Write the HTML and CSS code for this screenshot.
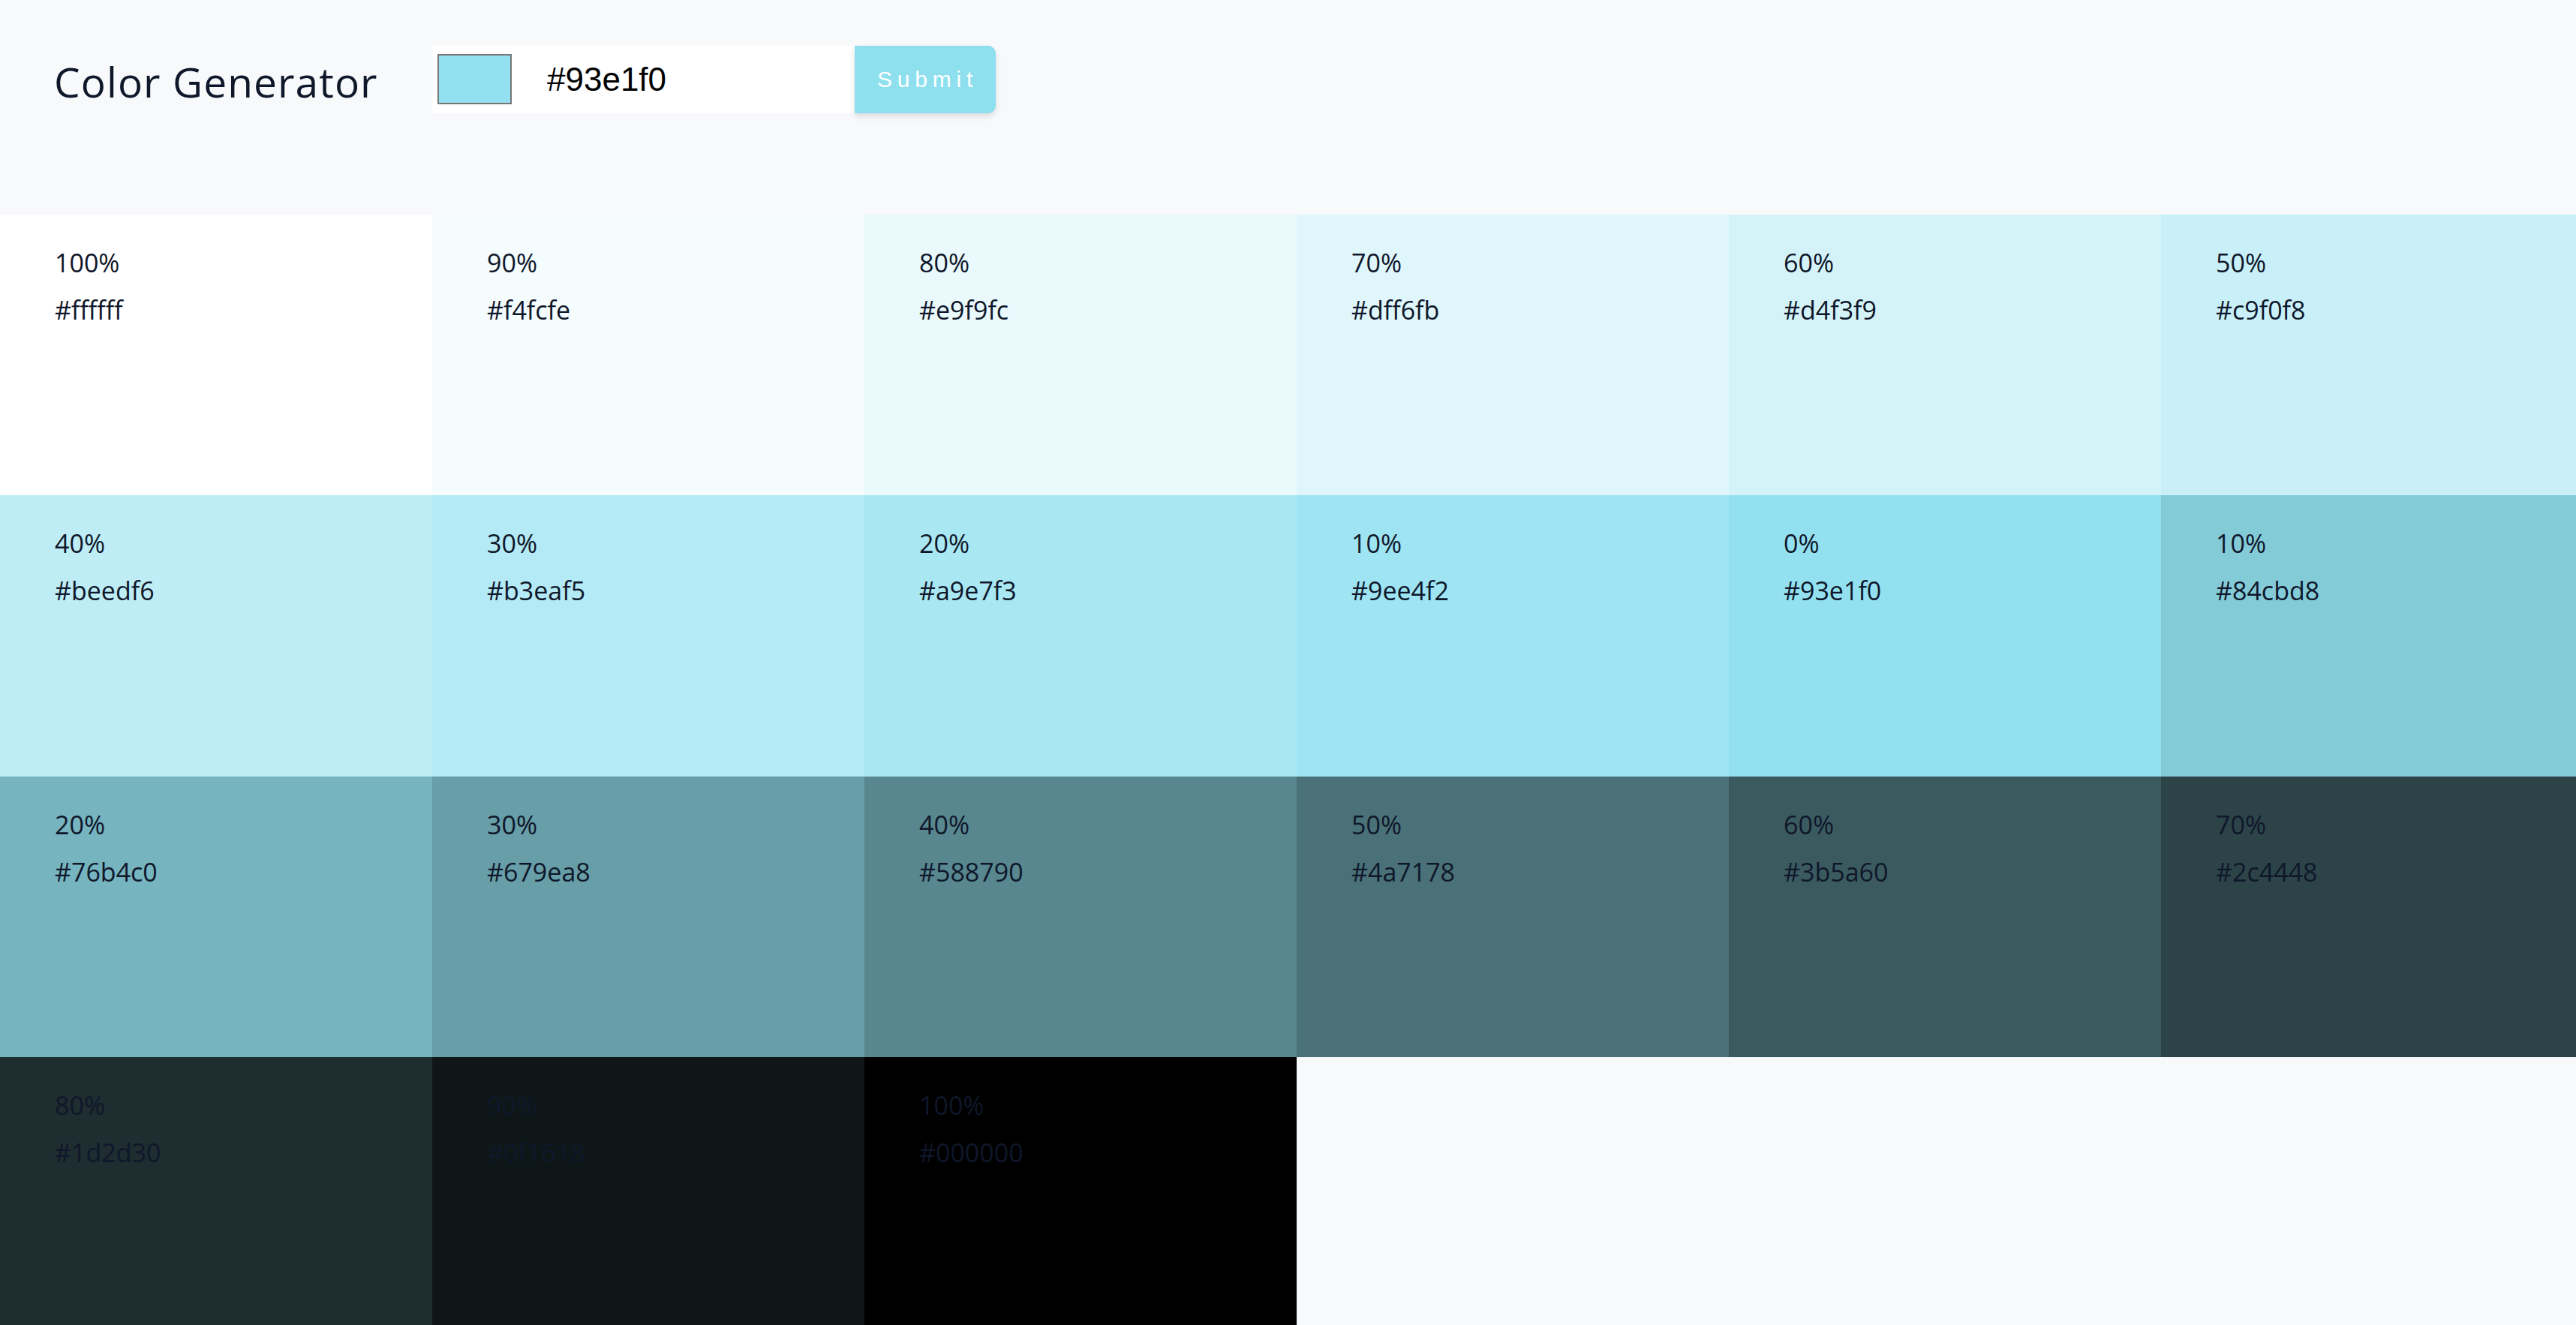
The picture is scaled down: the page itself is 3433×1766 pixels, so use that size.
FILE: index.html
```html
<!DOCTYPE html>
<html lang="en">
<head>
<meta charset="utf-8">
<title>Color Generator</title>
<link rel="stylesheet" href="styles.css">
</head>
<body>
<section class="header">
  <h3 class="title">Color Generator</h3>
  <form class="form">
    <div class="field">
      <span class="swatch"></span>
      <input class="hex-input" type="text" value="#93e1f0">
    </div>
    <button class="btn" type="button">Submit</button>
  </form>
</section>
<section class="colors">
  <article class="tile" style="background:#ffffff"><p class="pct">100%</p><p class="hex">#ffffff</p></article>
  <article class="tile" style="background:#f4fcfe"><p class="pct">90%</p><p class="hex">#f4fcfe</p></article>
  <article class="tile" style="background:#e9f9fc"><p class="pct">80%</p><p class="hex">#e9f9fc</p></article>
  <article class="tile" style="background:#dff6fb"><p class="pct">70%</p><p class="hex">#dff6fb</p></article>
  <article class="tile" style="background:#d4f3f9"><p class="pct">60%</p><p class="hex">#d4f3f9</p></article>
  <article class="tile" style="background:#c9f0f8"><p class="pct">50%</p><p class="hex">#c9f0f8</p></article>
  <article class="tile" style="background:#beedf6"><p class="pct">40%</p><p class="hex">#beedf6</p></article>
  <article class="tile" style="background:#b3eaf5"><p class="pct">30%</p><p class="hex">#b3eaf5</p></article>
  <article class="tile" style="background:#a9e7f3"><p class="pct">20%</p><p class="hex">#a9e7f3</p></article>
  <article class="tile" style="background:#9ee4f2"><p class="pct">10%</p><p class="hex">#9ee4f2</p></article>
  <article class="tile" style="background:#93e1f0"><p class="pct">0%</p><p class="hex">#93e1f0</p></article>
  <article class="tile" style="background:#84cbd8"><p class="pct">10%</p><p class="hex">#84cbd8</p></article>
  <article class="tile" style="background:#76b4c0"><p class="pct">20%</p><p class="hex">#76b4c0</p></article>
  <article class="tile" style="background:#679ea8"><p class="pct">30%</p><p class="hex">#679ea8</p></article>
  <article class="tile" style="background:#588790"><p class="pct">40%</p><p class="hex">#588790</p></article>
  <article class="tile" style="background:#4a7178"><p class="pct">50%</p><p class="hex">#4a7178</p></article>
  <article class="tile" style="background:#3b5a60"><p class="pct">60%</p><p class="hex">#3b5a60</p></article>
  <article class="tile" style="background:#2c4448"><p class="pct">70%</p><p class="hex">#2c4448</p></article>
  <article class="tile" style="background:#1d2d30"><p class="pct">80%</p><p class="hex">#1d2d30</p></article>
  <article class="tile" style="background:#0f1618"><p class="pct">90%</p><p class="hex">#0f1618</p></article>
  <article class="tile" style="background:#000000"><p class="pct">100%</p><p class="hex">#000000</p></article>
</section>
</body>
</html>
```

FILE: styles.css
```css
html, body {
  margin: 0;
  padding: 0;
  overflow: hidden;
}

body {
  background: #f8f9fb;
  color: #0f172a;
  font-family: "Open Sans", "Noto Sans", sans-serif;
}

.header {
  box-sizing: border-box;
  height: 286px;
  padding: 61px 0 0 72px;
  display: flex;
  align-items: flex-start;
}

.title {
  margin: 0;
  width: 504px;
  height: 90px;
  display: flex;
  align-items: center;
  font-size: 55px;
  font-weight: 400;
  letter-spacing: 1.1px;
  color: #0f172a;
  padding-top: 4px;
  box-sizing: border-box;
}

.form {
  display: flex;
  margin: 0;
}

.field {
  box-sizing: border-box;
  width: 563px;
  height: 90px;
  background: #ffffff;
  display: flex;
  align-items: center;
  padding-left: 7px;
}

.swatch {
  box-sizing: border-box;
  width: 99px;
  height: 67px;
  background: #93e1f0;
  border: 2px solid #767676;
  margin-bottom: 1px;
}

.hex-input {
  border: none;
  outline: none;
  background: transparent;
  font-family: "Liberation Sans", Arial, sans-serif;
  font-size: 44px;
  color: #000000;
  margin-left: 47px;
  padding: 0;
  width: 380px;
}

.btn {
  box-sizing: border-box;
  width: 188px;
  height: 90px;
  border: none;
  border-radius: 0 10px 10px 0;
  background: #8fe0ef;
  color: #ffffff;
  font-family: "Liberation Sans", Arial, sans-serif;
  font-size: 30px;
  letter-spacing: 6.8px;
  padding: 0 0 0 6px;
  box-shadow: 0 4px 8px rgba(0, 0, 0, 0.12);
  cursor: pointer;
}

.colors {
  display: grid;
  grid-template-columns: repeat(6, 576px);
  grid-auto-rows: 374.3px;
  width: 3456px;
}

.tile {
  box-sizing: border-box;
  padding: 33px 0 0 73px;
}

.pct, .hex {
  margin: 0;
  font-size: 34px;
  line-height: 63px;
  color: #0f172a;
}
```
